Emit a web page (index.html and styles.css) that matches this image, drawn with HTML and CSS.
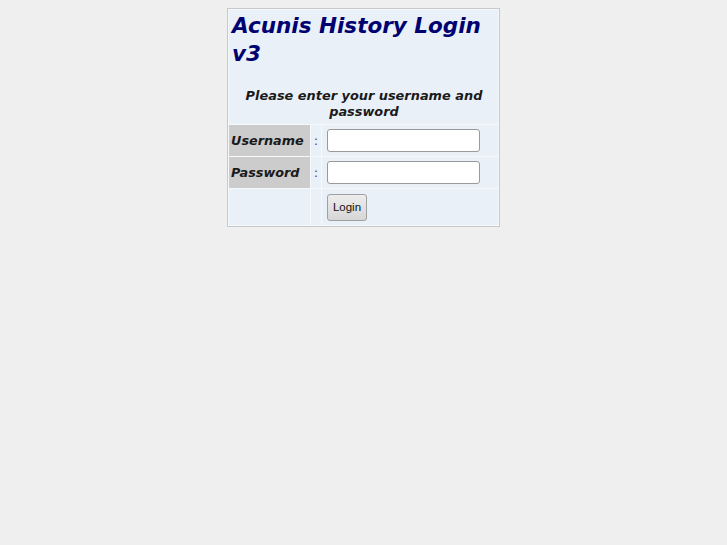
FILE: index.html
```html
<!DOCTYPE html>
<html>
<head>
<meta charset="utf-8">
<link rel="stylesheet" href="styles.css">
<title>Acunis History Login v3</title>
</head>
<body>
<form class="login-form">
<table class="login">
  <tr>
    <td colspan="3" class="head">
      <h1 class="title">Acunis History Login v3</h1>
      <p class="intro">Please enter your username and password</p>
    </td>
  </tr>
  <tr>
    <th class="label">Username</th>
    <td class="colon">:</td>
    <td class="field"><input class="text" type="text"></td>
  </tr>
  <tr>
    <th class="label">Password</th>
    <td class="colon">:</td>
    <td class="field"><input class="text" type="password"></td>
  </tr>
  <tr>
    <td class="blank"></td>
    <td class="colon"></td>
    <td class="field action"><button class="btn" type="button">Login</button></td>
  </tr>
</table>
</form>
</body>
</html>
```
FILE: styles.css
```css
html, body {
  background: #efefef;
}
body {
  margin: 8px;
  font-family: "DejaVu Sans", sans-serif;
}
.login-form {
  margin: 0;
}
.login {
  margin: 0 auto;
  width: 273px;
  border: 1px solid #c8c8c8;
  border-spacing: 1px;
  background: #f6f9fc;
}
.login td, .login th {
  background: #e9f0f8;
  padding: 0;
}
.head {
  padding: 0 2px 0 3px !important;
}
.title {
  margin: 0;
  padding-top: 2px;
  font-size: 21.5px;
  font-weight: bold;
  font-style: italic;
  color: #000070;
  line-height: 28px;
}
.intro {
  margin: 20px 0 4px;
  text-align: center;
  font-style: italic;
  font-weight: bold;
  font-size: 12.9px;
  line-height: 16px;
  color: #1a1a1a;
}
.label {
  background: #cccccc !important;
  width: 79px;
  height: 31px;
  text-align: left;
  padding-left: 2px !important;
  font-size: 12.8px;
  font-weight: bold;
  font-style: italic;
  color: #1a1a1a;
}
.colon {
  width: 10px;
  text-align: center;
  font-size: 12px;
  color: #444;
}
.field {
  padding-left: 5px !important;
}
.text {
  box-sizing: border-box;
  width: 153px;
  height: 23px;
  margin: 0;
  border: 1px solid #9a9a9a;
  border-radius: 3px;
  background: #fff;
  display: block;
}
.action {
  height: 36px;
}
.btn {
  box-sizing: border-box;
  display: block;
  width: 40px;
  height: 27px;
  padding: 0;
  border: 1px solid #a0a0a0;
  border-radius: 3px;
  background: linear-gradient(#ededed, #d6d6d6);
  font-family: "Liberation Sans", sans-serif;
  font-size: 11.5px;
  color: #111;
}
```
